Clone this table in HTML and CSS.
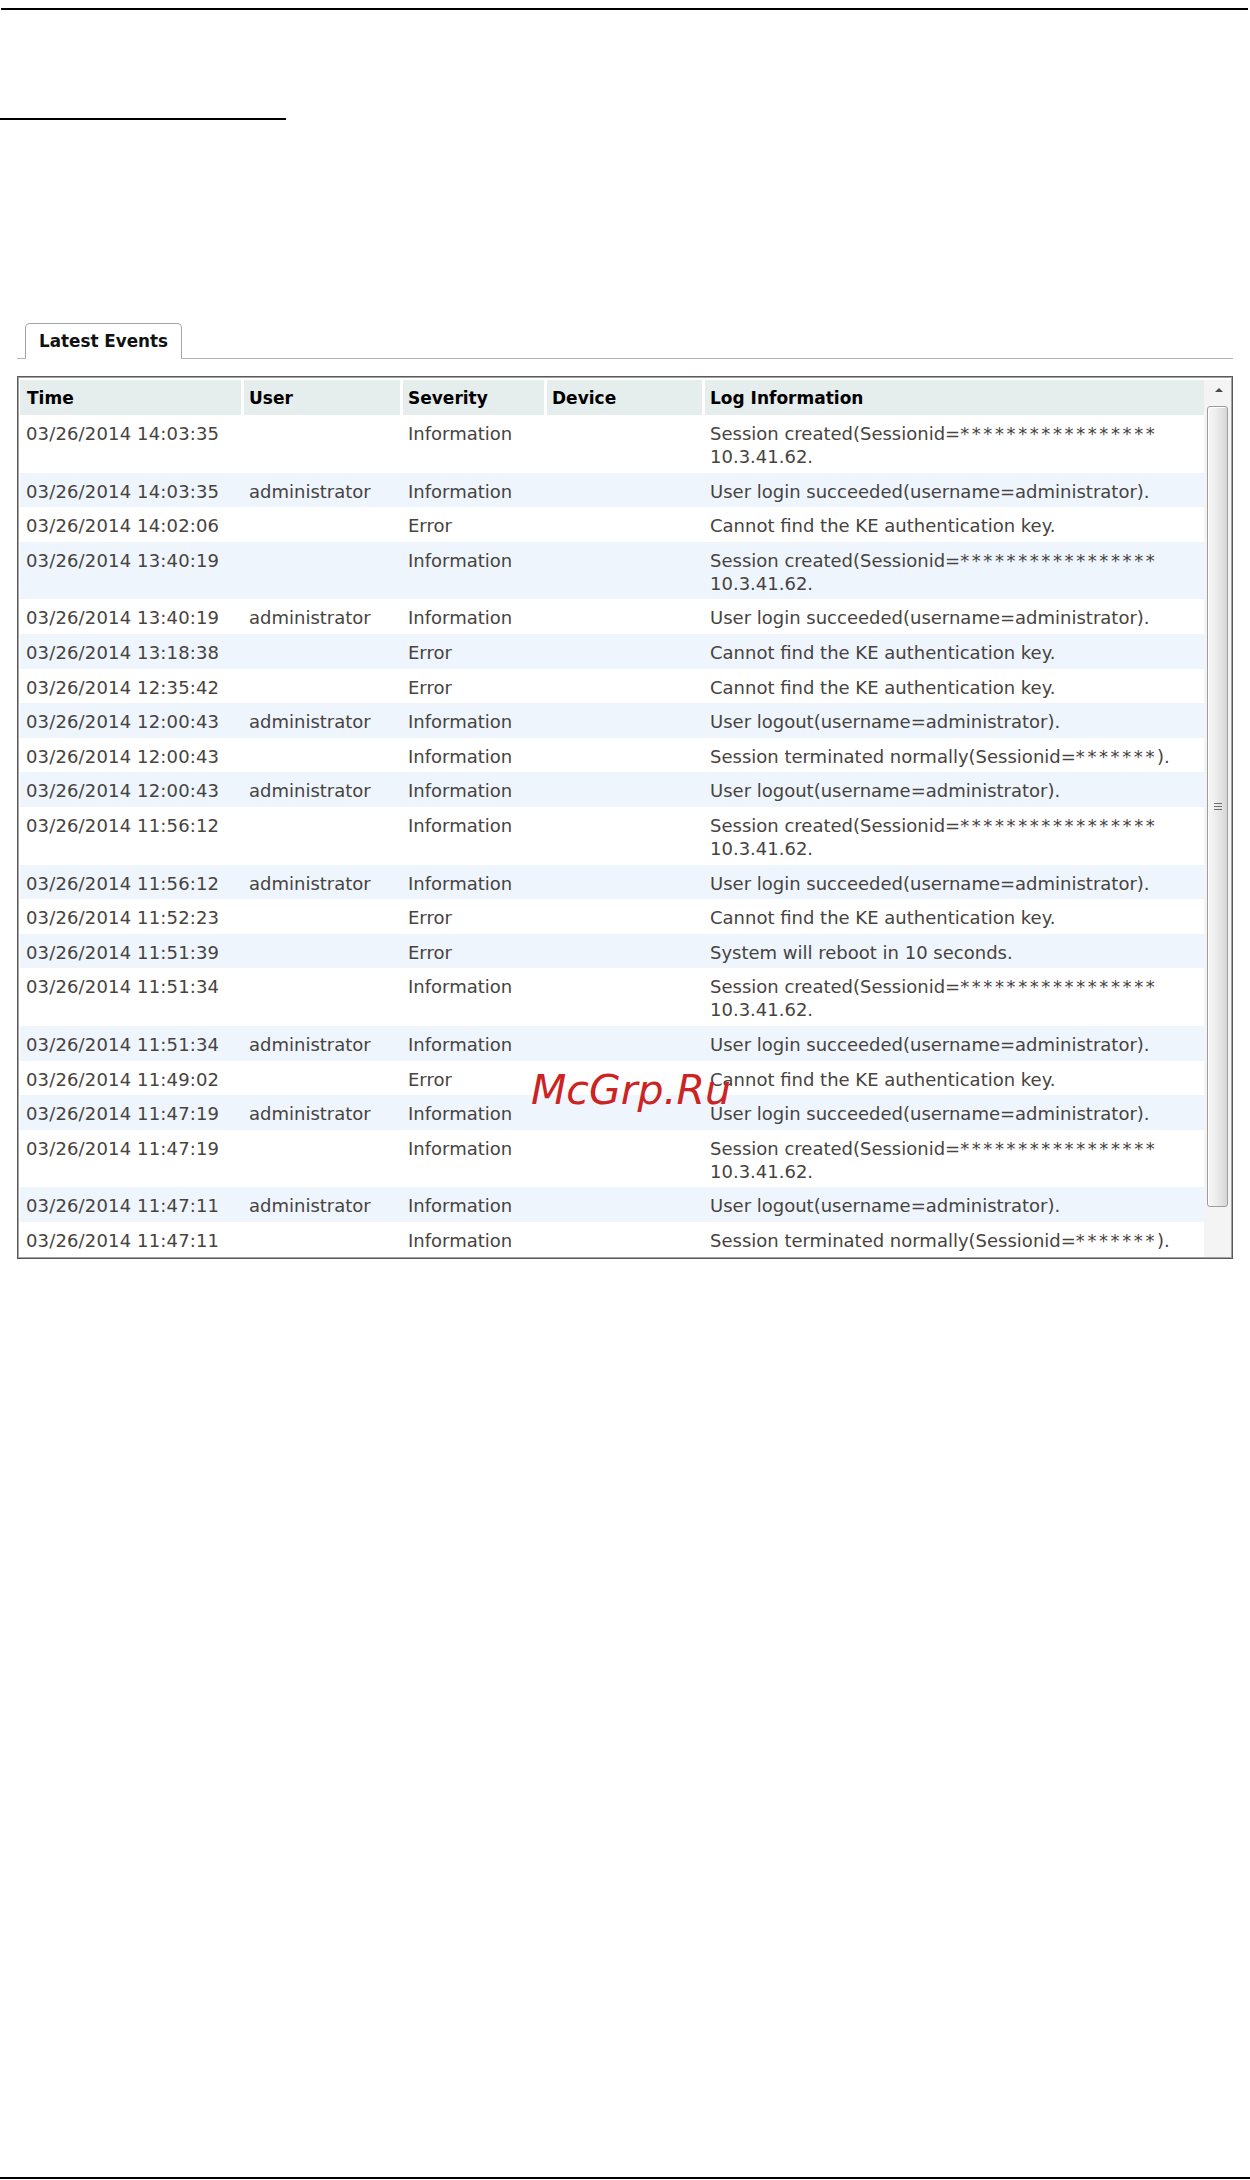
FILE: index.html
```html
<!DOCTYPE html>
<html>
<head>
<meta charset="utf-8">
<title>Latest Events</title>
<link rel="stylesheet" href="styles.css">
</head>
<body>
<div class="page">
  <div class="rule-top"></div>
  <div class="heading-underline"></div>

  <div class="tab-strip">
    <div class="tab">Latest Events</div>
  </div>

  <div class="grid">
    <div class="grid-body">
      <table class="events">
        <colgroup>
          <col class="c-time"><col class="c-user"><col class="c-sev"><col class="c-dev"><col class="c-log">
        </colgroup>
        <thead>
          <tr><th>Time</th><th>User</th><th>Severity</th><th>Device</th><th>Log Information</th></tr>
        </thead>
        <tbody>
          <tr><td>03/26/2014 14:03:35</td><td></td><td>Information</td><td></td><td>Session created(Sessionid=<span class="ast">*****************</span> 10.3.41.62.</td></tr>
          <tr><td>03/26/2014 14:03:35</td><td>administrator</td><td>Information</td><td></td><td>User login succeeded(username=administrator).</td></tr>
          <tr><td>03/26/2014 14:02:06</td><td></td><td>Error</td><td></td><td>Cannot find the KE authentication key.</td></tr>
          <tr><td>03/26/2014 13:40:19</td><td></td><td>Information</td><td></td><td>Session created(Sessionid=<span class="ast">*****************</span> 10.3.41.62.</td></tr>
          <tr><td>03/26/2014 13:40:19</td><td>administrator</td><td>Information</td><td></td><td>User login succeeded(username=administrator).</td></tr>
          <tr><td>03/26/2014 13:18:38</td><td></td><td>Error</td><td></td><td>Cannot find the KE authentication key.</td></tr>
          <tr><td>03/26/2014 12:35:42</td><td></td><td>Error</td><td></td><td>Cannot find the KE authentication key.</td></tr>
          <tr><td>03/26/2014 12:00:43</td><td>administrator</td><td>Information</td><td></td><td>User logout(username=administrator).</td></tr>
          <tr><td>03/26/2014 12:00:43</td><td></td><td>Information</td><td></td><td>Session terminated normally(Sessionid=<span class="ast">*******</span>).</td></tr>
          <tr><td>03/26/2014 12:00:43</td><td>administrator</td><td>Information</td><td></td><td>User logout(username=administrator).</td></tr>
          <tr><td>03/26/2014 11:56:12</td><td></td><td>Information</td><td></td><td>Session created(Sessionid=<span class="ast">*****************</span> 10.3.41.62.</td></tr>
          <tr><td>03/26/2014 11:56:12</td><td>administrator</td><td>Information</td><td></td><td>User login succeeded(username=administrator).</td></tr>
          <tr><td>03/26/2014 11:52:23</td><td></td><td>Error</td><td></td><td>Cannot find the KE authentication key.</td></tr>
          <tr><td>03/26/2014 11:51:39</td><td></td><td>Error</td><td></td><td>System will reboot in 10 seconds.</td></tr>
          <tr><td>03/26/2014 11:51:34</td><td></td><td>Information</td><td></td><td>Session created(Sessionid=<span class="ast">*****************</span> 10.3.41.62.</td></tr>
          <tr><td>03/26/2014 11:51:34</td><td>administrator</td><td>Information</td><td></td><td>User login succeeded(username=administrator).</td></tr>
          <tr><td>03/26/2014 11:49:02</td><td></td><td>Error</td><td></td><td>Cannot find the KE authentication key.</td></tr>
          <tr><td>03/26/2014 11:47:19</td><td>administrator</td><td>Information</td><td></td><td>User login succeeded(username=administrator).</td></tr>
          <tr><td>03/26/2014 11:47:19</td><td></td><td>Information</td><td></td><td>Session created(Sessionid=<span class="ast">*****************</span> 10.3.41.62.</td></tr>
          <tr><td>03/26/2014 11:47:11</td><td>administrator</td><td>Information</td><td></td><td>User logout(username=administrator).</td></tr>
          <tr><td>03/26/2014 11:47:11</td><td></td><td>Information</td><td></td><td>Session terminated normally(Sessionid=<span class="ast">*******</span>).</td></tr>
        </tbody>
      </table>
    </div>
    <div class="scrollbar">
      <div class="sb-arrow"></div>
      <div class="sb-thumb"><div class="sb-grip"></div></div>
    </div>
  </div>

  <div class="watermark">McGrp.Ru</div>

  <div class="rule-bottom"></div>
</div>
</body>
</html>
```

FILE: styles.css
```css
* {
  box-sizing: border-box;
}

html, body {
  margin: 0;
  padding: 0;
  background: #ffffff;
}

body {
  font-family: "DejaVu Sans", Verdana, sans-serif;
  color: #444;
}

.page {
  position: relative;
  min-height: 2180px;
  display: flex;
  flex-direction: column;
}

.rule-top {
  margin: 8px 2px 0 1px;
  height: 2px;
  background: #000;
}

.heading-underline {
  margin-top: 108px;
  width: 286px;
  height: 2px;
  background: #000;
}

.tab-strip {
  margin-top: 203px;
  margin-left: 17px;
  width: 1216px;
  border-bottom: 1px solid #b4b4b4;
  display: flex;
  padding-left: 8px;
}

.tab {
  margin-bottom: -1px;
  width: 157px;
  height: 36px;
  border: 1px solid #a4a4a4;
  border-bottom: 1px solid #fff;
  border-radius: 5px 5px 0 0;
  background: #fff;
  padding: 7px 0 0 13px;
  font-weight: bold;
  font-size: 16.8px;
  line-height: 21px;
  color: #111;
}

.grid {
  margin-top: 17px;
  margin-left: 17px;
  width: 1216px;
  height: 883px;
  border: 1px solid #5a5a5a;
  box-shadow: inset 0 0 0 1px #a2a2a2;
  padding: 3px 1px 1px 2px;
  display: flex;
}

.grid-body {
  flex: 1;
  overflow: hidden;
}

.events {
  width: 1184px;
  table-layout: fixed;
  border-collapse: separate;
  border-spacing: 0;
}

.c-time { width: 221px; }
.c-user { width: 159px; }
.c-sev  { width: 144px; }
.c-dev  { width: 158px; }
.c-log  { width: 502px; }

.events th {
  text-align: left;
  background: #e5eded;
  color: #000;
  font-size: 17px;
  font-weight: bold;
  line-height: 21px;
  padding: 8px 0 6px 5px;
  border-left: 3px solid #fff;
  white-space: nowrap;
}

.events th:first-child {
  border-left: 0;
  padding-left: 7px;
}

.events td {
  font-size: 18px;
  line-height: 23px;
  padding: 7px 6px 4.6px 8px;
  vertical-align: top;
  color: #474340;
}

.events td:first-child {
  padding-left: 6px;
  letter-spacing: 0.15px;
}

.events tbody tr:nth-child(even) {
  background: #eef5fd;
}

.ast {
  letter-spacing: 2.6px;
}

.scrollbar {
  width: 27px;
  background: #f4f4f4;
  display: flex;
  flex-direction: column;
  align-items: center;
}

.sb-arrow {
  margin-top: 8px;
  margin-left: 3px;
  width: 0;
  height: 0;
  border-left: 4px solid transparent;
  border-right: 4px solid transparent;
  border-bottom: 4px solid #4a4a4a;
}

.sb-thumb {
  margin-top: 14px;
  width: 21px;
  height: 801px;
  border: 1px solid #9c9c9c;
  border-radius: 3px;
  background: linear-gradient(to right, #f7f7f7 0%, #ececec 45%, #d6d6d6 100%);
  box-shadow: inset 1px 1px 0 #ffffff;
  display: flex;
  align-items: center;
  justify-content: center;
}

.sb-grip {
  width: 8px;
  height: 7px;
  background: repeating-linear-gradient(to bottom, #6e6e6e 0, #6e6e6e 1px, transparent 1px, transparent 3px);
}

.watermark {
  position: absolute;
  left: 531px;
  top: 1070px;
  font-family: "DejaVu Sans", Verdana, sans-serif;
  font-size: 41px;
  font-style: italic;
  line-height: 40px;
  color: #cc2424;
}

.rule-bottom {
  margin-top: auto;
  margin-bottom: 1px;
  height: 2px;
  background: #000;
}
```
